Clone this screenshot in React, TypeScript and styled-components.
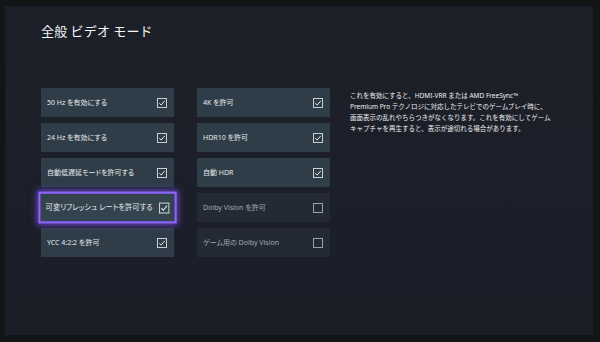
import React from 'react'
import styled, { createGlobalStyle, css } from 'styled-components'

const GlobalStyle = createGlobalStyle`
  html, body {
    margin: 0;
    padding: 0;
    background: #131416;
  }
  body {
    width: 600px;
    height: 342px;
    overflow: hidden;
    font-family: 'Noto Sans', 'Noto Sans CJK JP', sans-serif;
  }
`

type Option = {
  label: string
  checked: boolean
  focused?: boolean
  dim?: boolean
}

const leftOptions: Option[] = [
  { label: '50 Hz を有効にする', checked: true },
  { label: '24 Hz を有効にする', checked: true },
  { label: '自動低遅延モードを許可する', checked: true },
  { label: '可変リフレッシュ レートを許可する', checked: true, focused: true },
  { label: 'YCC 4:2:2 を許可', checked: true },
]

const rightOptions: Option[] = [
  { label: '4K を許可', checked: true },
  { label: 'HDR10 を許可', checked: true },
  { label: '自動 HDR', checked: true },
  { label: 'Dolby Vision を許可', checked: false, dim: true },
  { label: 'ゲーム用の Dolby Vision', checked: false, dim: true },
]

function CheckBox({ checked, dim }: { checked: boolean; dim?: boolean }) {
  return (
    <Box $dim={dim}>
      {checked && (
        <svg width="8" height="8" viewBox="0 0 8 8">
          <polyline
            points="1.3,4.2 3.2,6 6.8,1.8"
            fill="none"
            stroke="#e8ebee"
            strokeWidth="1"
          />
        </svg>
      )}
    </Box>
  )
}

function OptionTile({ option }: { option: Option }) {
  return (
    <Tile $checked={option.checked} $focused={option.focused}>
      <Label $dim={option.dim}>{option.label}</Label>
      <CheckBox checked={option.checked} dim={option.dim} />
    </Tile>
  )
}

export default function App() {
  return (
    <>
      <GlobalStyle />
      <Screen>
        <Title>全般 ビデオ モード</Title>
        <Content>
          <Column>
            {leftOptions.map((o) => (
              <OptionTile key={o.label} option={o} />
            ))}
          </Column>
          <Column>
            {rightOptions.map((o) => (
              <OptionTile key={o.label} option={o} />
            ))}
          </Column>
          <Description>
            これを有効にすると、HDMI-VRR または AMD FreeSync™
            <br />
            Premium Pro テクノロジに対応したテレビでのゲームプレイ時に、
            <br />
            画面表示の乱れやちらつきがなくなります。これを有効にしてゲーム
            <br />
            キャプチャを再生すると、表示が途切れる場合があります。
          </Description>
        </Content>
      </Screen>
    </>
  )
}

const Screen = styled.div`
  margin: 6px 7px 0 5px;
  height: 329px;
  box-sizing: border-box;
  padding: 15px 0 0 36px;
  background: linear-gradient(180deg, #1d1f28 0%, #1c1f29 60%, #1b1e27 100%);
  color: #f2f3f5;
`

const Title = styled.h1`
  margin: 0;
  font-family: 'Noto Sans CJK JP', sans-serif;
  font-size: 13px;
  font-weight: 400;
  line-height: 20px;
  letter-spacing: 0.2px;
  color: #f4f5f7;
`

const Content = styled.div`
  display: flex;
  align-items: flex-start;
  margin-top: 47px;
`

const Column = styled.div`
  display: flex;
  flex-direction: column;
  gap: 6px;
  width: 133px;
  margin-right: 23px;

  &:nth-child(2) {
    margin-right: 20px;
  }
`

const Tile = styled.div<{ $checked: boolean; $focused?: boolean }>`
  box-sizing: border-box;
  height: 29px;
  display: flex;
  align-items: center;
  justify-content: space-between;
  padding: 0 7px 0 6px;
  background: ${(p) => (p.$checked ? '#2e3d47' : '#242a34')};

  ${(p) =>
    p.$focused &&
    css`
      background: #33444e;
      border: 2px solid #8e62ff;
      box-shadow: 0 0 6px 1px rgba(130, 80, 255, 0.75);
      transform: scale(1.04, 1.1);
      padding: 0 5px 0 5px;
    `}
`

const Label = styled.span<{ $dim?: boolean }>`
  font-size: 7px;
  line-height: 10px;
  white-space: nowrap;
  font-feature-settings: 'palt';
  color: ${(p) => (p.$dim ? '#a3a9b0' : '#e8eaed')};
`

const Box = styled.div<{ $dim?: boolean }>`
  flex: none;
  box-sizing: border-box;
  width: 10px;
  height: 10px;
  border: 1px solid ${(p) => (p.$dim ? '#9aa0a8' : '#c9cdd2')};
  display: flex;
  align-items: center;
  justify-content: center;
`

const Description = styled.p`
  margin: 2px 0 0;
  font-size: 6.5px;
  line-height: 11px;
  color: #eef0f2;
  white-space: nowrap;
`
